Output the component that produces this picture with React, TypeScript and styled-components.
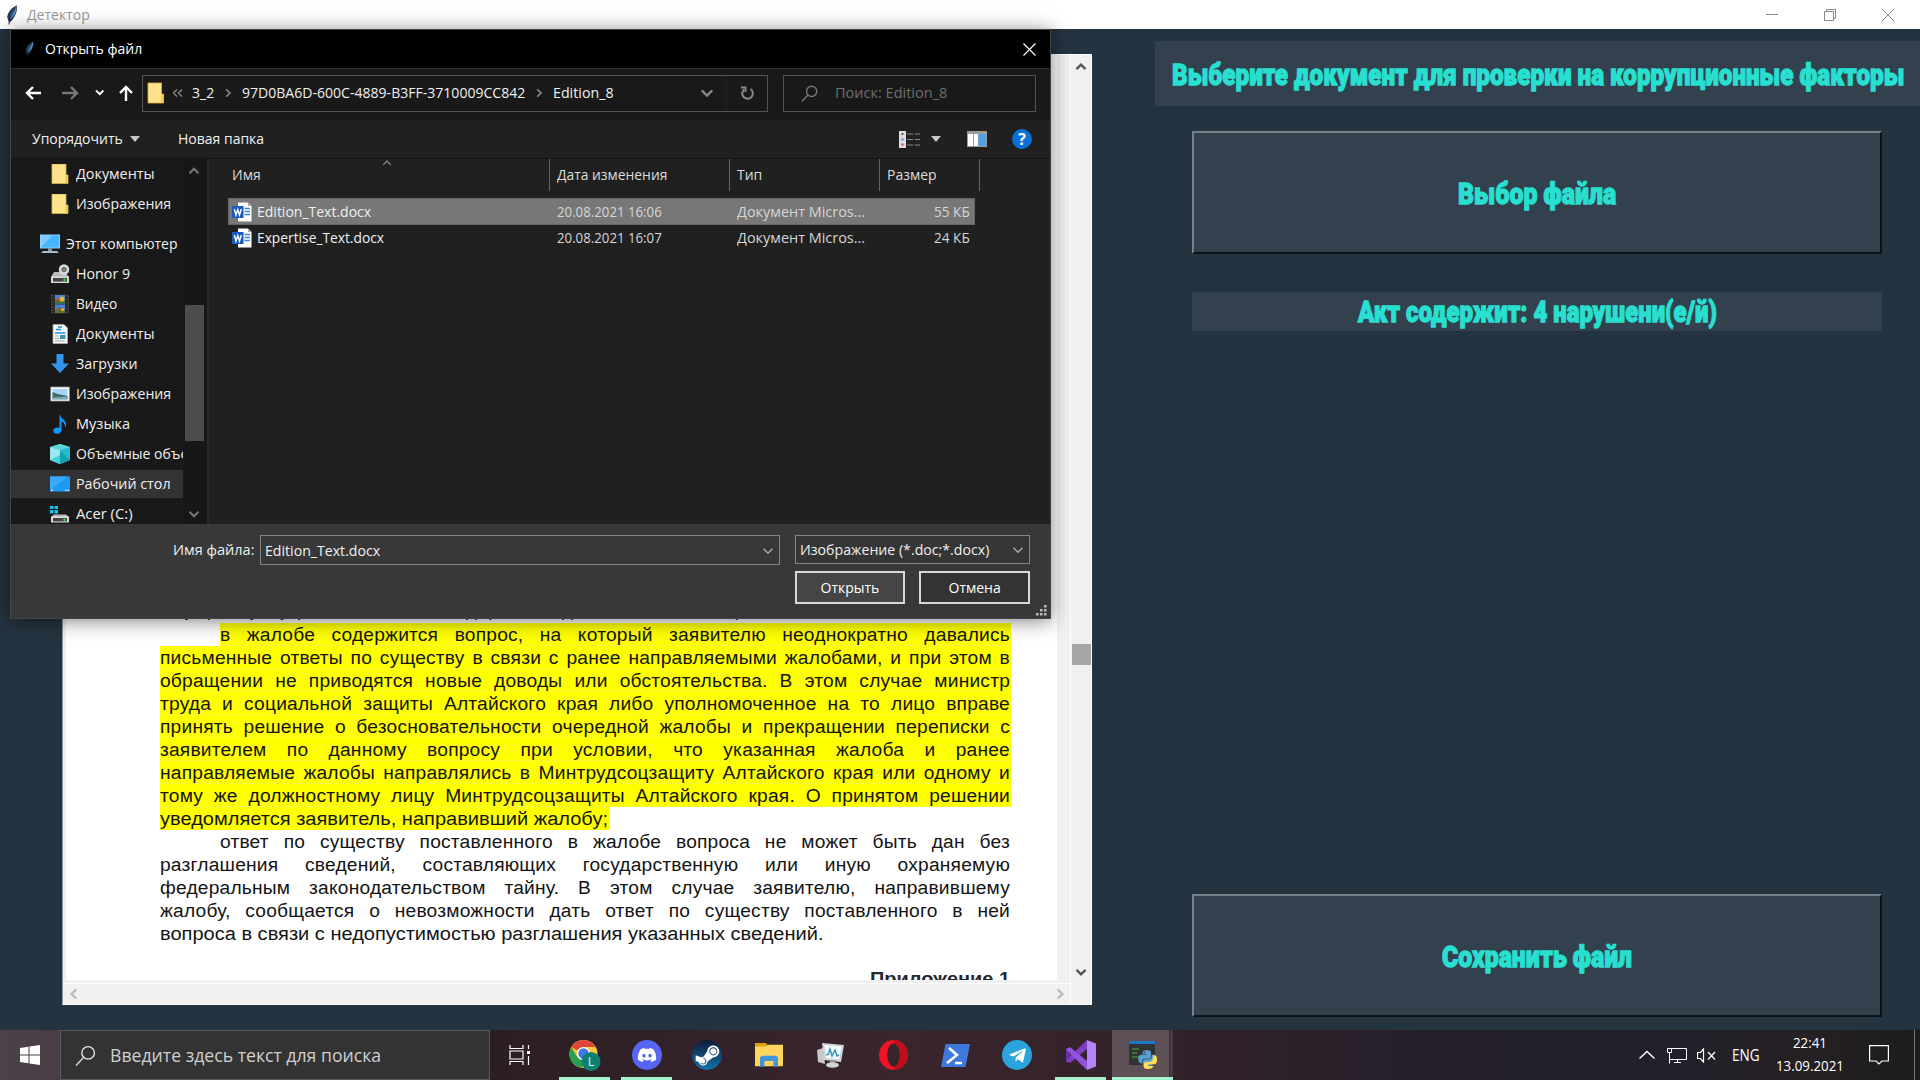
import React, { useLayoutEffect, useRef, useState } from "react";
import styled, { createGlobalStyle, css } from "styled-components";
import { FaDiscord, FaSteamSymbol, FaTelegramPlane, FaPython } from "react-icons/fa";

const Global = createGlobalStyle`
  * { box-sizing: border-box; }
  html, body { margin: 0; padding: 0; }
  body { width: 1920px; height: 1080px; overflow: hidden; font-family: "Open Sans", "Noto Sans", sans-serif; font-size: 14px; }
`;

/* Text squeezed horizontally to an exact width */
const FitBox = styled.span<{ $w: number }>`
  display: inline-block;
  flex: none;
  width: ${(p) => p.$w}px;
  white-space: nowrap;
  text-align: left;
`;
const FitInner = styled.span`
  display: inline-block;
  transform-origin: 0 50%;
`;
function Fit({ w, children }: { w: number; children: React.ReactNode }) {
  const ref = useRef<HTMLSpanElement>(null);
  const [scale, setScale] = useState(1);
  useLayoutEffect(() => {
    if (ref.current) setScale(w / ref.current.offsetWidth);
  }, [w]);
  return (
    <FitBox $w={w}>
      <FitInner ref={ref} style={{ transform: `scaleX(${scale})` }}>{children}</FitInner>
    </FitBox>
  );
}

const Screen = styled.div`
  width: 1920px; height: 1080px; display: flex; flex-direction: column; position: relative; overflow: hidden;
`;
const TitleBar = styled.header`
  height: 29px; background: #fff; display: flex; align-items: center; color: #999; padding-left: 6px; flex: none;
`;
const TitleText = styled.div`margin-left: 9px; line-height: 29px; flex: 1;`;
const WinButtons = styled.div`display: flex; gap: 46px; padding-right: 26px; svg { display: block; }`;

const Body = styled.main`
  flex: 1; background: #243340; display: flex; align-items: flex-start; min-height: 0;
`;

/* Document viewer */
const Viewer = styled.section`
  margin: 25px 0 0 62px; width: 1030px; height: 951px; background: #f0f0f0; flex: none;
  border: 1px solid #fff; border-left: 1px solid #8f979c; display: flex;
`;
const ViewerMain = styled.div`width: 1008px; display: flex; flex-direction: column; border-right: 1px solid #fff;`;
const Page = styled.div`
  margin-left: 3px; width: 991px; height: 925px; background: #fff; overflow: hidden;
  padding: 543px 0 0 94px; font-family: "Liberation Sans", Arial, sans-serif; color: #141414;
`;
const HScroll = styled.div`
  margin-top: 3px; border-top: 1px solid #fff; flex: 1; display: flex; align-items: center; justify-content: space-between; padding: 0 4px 0 5px;
`;
const VScroll = styled.div`
  flex: 1; display: flex; flex-direction: column; align-items: center; justify-content: space-between; padding: 6px 0 26px;
`;
const VThumb = styled.div`width: 19px; height: 21px; background: #a6a6a6; margin-top: 269px;`;
const Line = styled.div<{ $indent?: boolean; $mark?: boolean; $gap?: number }>`
  width: ${(p) => (p.$indent ? 790 : 850)}px;
  margin-left: ${(p) => (p.$indent ? 60 : 0)}px;
  margin-top: ${(p) => p.$gap ?? 0}px;
  height: 23px; line-height: 24px; font-size: 19.2px; letter-spacing: 0.2px; word-spacing: -2px; white-space: nowrap;
  text-align: justify; text-align-last: justify;
  ${(p) => p.$mark && css`background: #ff0; box-shadow: inset 0 -1px #f6f63a, 1px 0 #ff0;`}
`;
const EndLine = styled.div<{ $mark?: boolean }>`
  display: inline-block; height: 23px; line-height: 24px; font-size: 19.2px; vertical-align: top; padding-right: 2px;
  ${(p) => p.$mark && css`background: #ff0;`}
`;
const Appendix = styled.div`width: 850px; text-align: right; font-weight: 700; font-size: 18.5px; line-height: 24px; margin-top: 22px; color: #26282f;`;

/* Right panel */
const Panel = styled.aside`
  margin-left: 63px; width: 765px; height: 1001px; display: flex; flex-direction: column; padding-top: 12px;
  font-family: Roboto, sans-serif; font-weight: 900; font-size: 30px; color: #28dfd0; -webkit-text-stroke: 1.3px #28dfd0;
`;
const Heading = styled.div`height: 65px; background: #32414d; display: flex; align-items: center; justify-content: center; padding-top: 2px;`;
const BigButton = styled.button`
  margin: 25px 0 0 37px; width: 690px; height: 123px; background: #32414d; padding: 1px 0 0; font: inherit; color: inherit;
  border: solid; border-width: 2px; border-color: #76818a #0c1216 #0c1216 #76818a; display: flex; align-items: center; justify-content: center;
`;
const Result = styled.div`margin: 38px 0 0 37px; width: 690px; height: 39px; background: #32414d; display: flex; align-items: center; justify-content: center;`;
const Spacer = styled.div`flex: 1;`;
const SaveWrap = styled.div`padding-bottom: 13px;`;

/* Dialog */
const Dialog = styled.div`
  position: absolute; left: 10px; top: 29px; width: 1041px; height: 590px; background: #202020; color: #f0f0f0;
  border: 1px solid #444; display: flex; flex-direction: column; box-shadow: 0 2px 18px rgba(0, 0, 0, 0.5);
`;
const DTitle = styled.div`
  height: 39px; background: #000; border-bottom: 1px solid #2e2e2e; display: flex; align-items: center; padding: 0 14px 0 13px; color: #fff; flex: none;
  svg { flex: none; }
`;
const DTitleText = styled.div`margin-left: 10px; flex: 1; line-height: 20px;`;
const Nav = styled.div`height: 51px; background: #191919; display: flex; align-items: center; padding: 0 0 3px 14px; flex: none;`;
const NavIcons = styled.div`width: 117px; display: flex; align-items: center; svg { display: block; }`;
const Box = styled.div<{ $w: number }>`
  width: ${(p) => p.$w}px; height: 37px; border: 1px solid #535353; display: flex; align-items: center; line-height: 20px;
`;
const Crumbs = styled.div`flex: 1; display: flex; align-items: center; padding-left: 4px; height: 100%; border-right: 1px solid #222;`;
const Sep = styled.div<{ $w: number }>`width: ${(p) => p.$w}px; display: flex; justify-content: center; svg { display: block; }`;
const DropCell = styled.div`margin-left: auto; width: 38px; display: flex; justify-content: center;`;
const RefreshCell = styled.div`width: 40px; display: flex; justify-content: center;`;
const SearchBox = styled(Box)`margin-left: 15px; color: #6e6e6e; padding-left: 17px; gap: 17px;`;
const Tools = styled.div`
  height: 39px; flex: none; display: flex; align-items: center; padding: 0 18px 0 21px; border-bottom: 1px solid #151515; line-height: 20px;
  svg { display: block; }
`;
const Triangle = styled.i<{ $m: string }>`
  border: 5px solid transparent; border-top: 6px solid #c8c8c8; border-bottom: 0; margin: ${(p) => p.$m};
`;
const HelpSlot = styled.div`margin-left: 25px;`;
const Content = styled.div`height: 365px; display: flex; flex: none;`;
const Tree = styled.div`width: 172px; background: #191919; overflow: hidden; display: flex; flex-direction: column;`;
const TreeRow = styled.div<{ $root?: boolean; $active?: boolean }>`
  flex: none; height: 28px; margin: ${(p) => (p.$root ? "11px 0 1px" : "1px 0")}; display: flex; align-items: center;
  padding-left: ${(p) => (p.$root ? 29 : 39)}px; gap: 6px; line-height: 20px;
  background: ${(p) => (p.$active ? "#333" : "transparent")};
  svg { display: block; flex: none; }
`;
const TreeScroll = styled.div`
  width: 26px; background: #171717; display: flex; flex-direction: column; align-items: center; padding: 6px 2px 4px 0; justify-content: space-between;
  border-right: 2px solid #2a2a2a;
`;
const TreeThumb = styled.div`width: 19px; height: 136px; background: #4d4d4d; margin-top: 60px;`;
const Files = styled.div`flex: 1; padding-left: 20px;`;
const grid = css`display: grid; grid-template-columns: 321px 180px 150px 1fr;`;
const HeadRow = styled.div`${grid} width: 751px; height: 31px; line-height: 32px; color: #ddd;`;
const HeadCell = styled.div<{ $first?: boolean }>`
  border-right: 1px solid #636363; padding-left: ${(p) => (p.$first ? 3 : 7)}px; display: flex; justify-content: space-between;
`;
const SortMark = styled.div`width: 12px; margin-right: 155px; display: flex; align-items: flex-start; margin-top: -1px;`;
const FileRow = styled.div<{ $sel?: boolean }>`
  ${grid} width: 747px; height: ${(p) => (p.$sel ? 27 : 25)}px; line-height: 24px; align-items: center; margin-left: -1px; color: #d6d6d6;
  border: 1px solid ${(p) => (p.$sel ? "#666" : "transparent")}; background: ${(p) => (p.$sel ? "#777" : "transparent")};
`;
const FileList = styled.div`padding-top: 8px;`;
const NameCell = styled.div`display: flex; align-items: center; gap: 5px; padding-left: 3px; color: #f0f0f0; svg { display: block; }`;
const Cell = styled.div<{ $right?: boolean }>`padding-left: 7px; ${(p) => p.$right && css`text-align: right; padding: 0 4px 0 0;`}`;
const Footer = styled.div`
  flex: 1; background: #383838; padding: 11px 20px 0 0; display: flex; gap: 15px; justify-content: flex-end; line-height: 20px;
`;
const NameGroup = styled.div`display: flex; gap: 6px; padding-top: 5px;`;
const Field = styled.div<{ $w: number; $h: number }>`
  width: ${(p) => p.$w}px; height: ${(p) => p.$h}px; border: 1px solid #858585; display: flex; align-items: center; justify-content: space-between; padding: 0 5px 0 4px; background: #353535;
`;
const NameField = styled(Field)`margin-top: -5px; padding-top: 1px; background: #383838;`;
const Actions = styled.div`width: 235px;`;
const ButtonRow = styled.div`display: flex; justify-content: space-between; margin-top: 7px;`;
const DButton = styled.button<{ $main?: boolean }>`
  width: ${(p) => (p.$main ? 110 : 111)}px; height: 33px; font: inherit; color: #fff; padding: 0; line-height: 20px;
  background: ${(p) => (p.$main ? "#454545" : "#333")}; border: 2px solid #d8d8d8;
`;
const Grip = styled.svg`position: absolute; right: 3px; bottom: 2px;`;

/* Taskbar */
const Taskbar = styled.footer`
  height: 50px; display: flex; flex: none; color: #fff;
  background: linear-gradient(90deg, #4b414a 0, #493e46 60px, #2b1e22 490px, #33222a 700px, #3a252c 900px, #33222a 1150px, #241f2b 1450px, #22202c 1650px, #252024 1800px, #1d1c1c 1920px);
`;
const Start = styled.div`width: 60px; display: flex; align-items: center; justify-content: center;`;
const Search = styled.div`
  width: 430px; background: #333; border: 1px solid #5a5a5a; display: flex; align-items: center; padding-left: 14px; gap: 14px; color: #cfcfcf; font-size: 18.5px; line-height: 26px;
`;
const TaskSlot = styled.div<{ $w: number; $run?: boolean; $active?: boolean; $m?: number }>`
  width: ${(p) => p.$w}px; margin-left: ${(p) => p.$m ?? 0}px; display: flex; align-items: center; justify-content: center;
  border-bottom: 3px solid ${(p) => (p.$run ? "#a6f2cf" : "transparent")}; padding-top: 3px;
  ${(p) => p.$active && css`background: linear-gradient(90deg, #5e5057 57px, #2b2024 57px, #4a3b42 58px) padding-box;`}
`;
const Tray = styled.div`margin-left: auto; display: flex; align-items: center; svg { display: block; flex: none; }`;
const TrayItem = styled.div<{ $m: number }>`margin-left: ${(p) => p.$m}px;`;
const Lang = styled.div`margin-left: 16px; font-size: 15.5px; line-height: 20px;`;
const Clock = styled.div`
  margin-left: 16px; margin-right: 1px; width: 68px; display: flex; flex-direction: column; align-items: center; font-size: 14.5px; line-height: 23px; padding-bottom: 2px;
`;
const ShowDesktop = styled.div`width: 6px; height: 50px; border-left: 1px solid #777; margin-left: 25px;`;
const Round = styled.div<{ $bg: string; $s?: number }>`
  width: 30px; height: 30px; border-radius: 50%; background: ${(p) => p.$bg}; display: flex; align-items: center; justify-content: center; font-size: ${(p) => p.$s ?? 20}px;
`;

/* Icons */
const Feather = ({ w = 12, h = 20 }) => (
  <svg width={w} height={h} viewBox="0 0 12 20">
    <path d="M11 0.5C7 1.5 2 6 1.2 12L2.6 16.5L4.5 17C8 13 11.5 8 11 .5Z" fill="#26364f" />
    <path d="M10.500 1C6.500 5 4 9 3.400 14.500C8 11.500 11 7 10.500 1Z" fill="#5590d4" />
    <path d="M9 3L3.600 13.500L3 19.500" stroke="#1a2030" strokeWidth="1" fill="none" />
  </svg>
);
const Chevron = ({ dir = "down", w = 12, c = "#999", s = 2 }: { dir?: string; w?: number; c?: string; s?: number }) => {
  const rot = { down: 0, up: 180, left: 90, right: 270 }[dir];
  return (
    <svg width={w} height={w} viewBox="0 0 12 12">
      <path d="M1.500 3.800L6 8.300L10.500 3.800" transform={`rotate(${rot} 6 6)`} stroke={c} strokeWidth={s} fill="none" />
    </svg>
  );
};
const Folder = ({ w = 18 }) => (
  <svg width={w} height="22" viewBox="0 0 18 22">
    <path d="M1 1H14.500V12H16.500V21H1Z" fill="#ffe28c" stroke="#d9b44a" strokeWidth=".8" />
    <path d="M14 21V13.500L16.800 12V21Z" fill="#f2c94c" />
  </svg>
);
const Word = () => (
  <svg width="20" height="20" viewBox="0 0 20 20">
    <path d="M6 .5H16L19.500 4V19.500H6Z" fill="#fff" />
    <path d="M16 .5V4H19.500Z" fill="#aaa" />
    <path d="M12.500 6.500H18M12.500 9.500H18M12.500 12.500H18" stroke="#3a86d8" strokeWidth="1.400" />
    <rect x="0" y="4" width="11.500" height="12" fill="#185abd" />
    <path d="M2.300 7L4 13L5.800 7.500L7.500 13L9.300 7" stroke="#fff" strokeWidth="1.400" fill="none" />
  </svg>
);
const Monitor = () => (
  <svg width="20" height="20" viewBox="0 0 20 20">
    <rect x=".5" y="1" width="19" height="13" fill="#45b6ff" stroke="#8fd0f5" />
    <path d="M1 13.500L12 1.500H1Z" fill="#7cccff" />
    <path d="M8 14.500H12V17H8Z" fill="#8795a0" /><path d="M1 19L3 17H17L19 19Z" fill="#a9bccb" />
  </svg>
);
const Svg20 = ({ children }: { children: React.ReactNode }) => <svg width="20" height="20" viewBox="0 0 20 20">{children}</svg>;
const TreeIcon = ({ kind }: { kind: string }) => {
  if (kind === "folder") return <Svg20><path d="M2 0H16V11H18V19.500H2Z" fill="#ffe28c" stroke="#d9b44a" strokeWidth=".8" /><path d="M15.500 19V12.500L18 11V19.500Z" fill="#f2c94c" /></Svg20>;
  if (kind === "phone") return <Svg20><path d="M1 13L4 8H15L19 13Z" fill="#b9bcbf" /><circle cx="14" cy="5.500" r="4" fill="#777" stroke="#dadada" strokeWidth="2.500" /><rect x="1" y="12.500" width="18" height="6.500" fill="#d9dadb" /><rect x="3" y="14" width="14" height="3.600" fill="#444" /><circle cx="14.500" cy="16" r="1.200" fill="#3be03b" /></Svg20>;
  if (kind === "video") return <Svg20><rect x="1.500" y="1" width="17" height="18" fill="#2c2c2c" stroke="#555" strokeDasharray="1.500 1.500" /><rect x="5" y="1" width="10" height="8.500" fill="#4a7fd6" /><rect x="5" y="10.500" width="10" height="8.500" fill="#4a7fd6" /><path d="M5 6L9 4L15 7V9.500H5Z" fill="#3c7d33" /><circle cx="12" cy="5" r="2.500" fill="#e8b72e" /><path d="M5 5H9V7H5Z" fill="#c54040" /><path d="M5 16L10 13L15 17V19H5Z" fill="#6b6b2b" /><circle cx="12.500" cy="15.500" r="1.500" fill="#e8b72e" /></Svg20>;
  if (kind === "doc") return <Svg20><path d="M3 .5H14L17.500 4V19.500H3Z" fill="#fafafa" stroke="#aaa" strokeWidth=".8" /><path d="M8 3H12M6 5.500H11M5 9H15.500" stroke="#1d8fd8" strokeWidth="1.600" /><path d="M5 12H9M5 14.500H9M5 17H15" stroke="#9aa" strokeWidth="1" /><rect x="10" y="11" width="5.500" height="4" fill="#4b8fae" /></Svg20>;
  if (kind === "down") return <Svg20><path d="M6.500 0H13.500V9.500H19L10 19L1 9.500H6.500Z" fill="#3396ee" /></Svg20>;
  if (kind === "pic") return <Svg20><rect x=".8" y="3" width="18.500" height="14" fill="#fff" stroke="#999" strokeWidth=".8" /><rect x="2.500" y="4.800" width="15" height="10.500" fill="#a9d5f5" /><path d="M2.500 8L8 10L17.500 12V15.300H2.500Z" fill="#3f6f68" /><path d="M2.500 13.500L17.500 12.500V15.300H2.500Z" fill="#7da6b8" /></Svg20>;
  if (kind === "music") return <Svg20><path d="M10 .5C10.500 5 16.500 5.500 16 11C16 12 15.500 13 15 13.500C15.300 9.500 13 8 11.500 7.500V16C11.500 21 3 20.500 3.300 16.500C3.600 13.500 8 12.800 9.500 14V.5Z" fill="#1299f5" /></Svg20>;
  if (kind === "cube") return <Svg20><path d="M10 0L20 3V16L10 20L0 16V3Z" fill="#27bccc" /><path d="M0 3L10 6V20L0 16Z" fill="#9be9ee" /><path d="M0 3L10 0L20 3L10 6Z" fill="#5fd6de" /><path d="M10 6V20L20 16Z" fill="#15a3b4" /><path d="M0 16L10 11V20Z" fill="#49d0da" /></Svg20>;
  if (kind === "desk") return <Svg20><rect x="0" y="2.500" width="20" height="15" fill="#1e9bf5" /><path d="M0 16L18 2.500H0Z" fill="#39aaff" /><path d="M1 16.300H3M15 16.300H16.500M17.500 16.300H19" stroke="#fff" /></Svg20>;
  return <Svg20><path d="M0 2H3.500V5H0ZM4.500 2H8V5H4.500ZM0 6H3.500V9.500H0ZM4.500 6H8V9.500H4.500Z" fill="#15c3f2" /><path d="M1 13L4 10.500H16L19 13Z" fill="#b9bcbf" /><rect x="1" y="12.500" width="18" height="6" fill="#d9dadb" /><rect x="3" y="14" width="14" height="3.400" fill="#444" /><circle cx="14.500" cy="15.800" r="1.200" fill="#3be03b" /></Svg20>;
};

const Magnifier = ({ s, c, w }: { s: number; c: string; w: number }) => (
  <svg width={s} height={s} viewBox="0 0 20 20" fill="none" stroke={c} strokeWidth={w}>
    <circle cx="12.500" cy="7.500" r="6" /><path d="M8.200 11.800L1 19.500" />
  </svg>
);

const tree: { t: string; k: string; w: number; active?: boolean }[] = [
  { t: "Honor 9", k: "phone", w: 54 },
  { t: "Видео", k: "video", w: 41 },
  { t: "Документы", k: "doc", w: 79 },
  { t: "Загрузки", k: "down", w: 61 },
  { t: "Изображения", k: "pic", w: 95 },
  { t: "Музыка", k: "music", w: 54 },
  { t: "Объемные объекты", k: "cube", w: 137 },
  { t: "Рабочий стол", k: "desk", w: 95, active: true },
  { t: "Acer (C:)", k: "disk", w: 57 },
];

const marked = [
  "в жалобе содержится вопрос, на который заявителю неоднократно давались",
  "письменные ответы по существу в связи с ранее направляемыми жалобами, и при этом в",
  "обращении не приводятся новые доводы или обстоятельства. В этом случае министр",
  "труда и социальной защиты Алтайского края либо уполномоченное на то лицо вправе",
  "принять решение о безосновательности очередной жалобы и прекращении переписки с",
  "заявителем по данному вопросу при условии, что указанная жалоба и ранее",
  "направляемые жалобы направлялись в Минтрудсоцзащиту Алтайского края или одному и",
  "тому же должностному лицу Минтрудсоцзащиты Алтайского края. О принятом решении",
];
const plain = [
  "ответ по существу поставленного в жалобе вопроса не может быть дан без",
  "разглашения сведений, составляющих государственную или иную охраняемую",
  "федеральным законодательством тайну. В этом случае заявителю, направившему",
  "жалобу, сообщается о невозможности дать ответ по существу поставленного в ней",
];

function OpenDialog() {
  return (
    <Dialog>
      <DTitle>
        <Feather w={11} h={16} />
        <DTitleText><Fit w={97}>Открыть файл</Fit></DTitleText>
        <svg width="13" height="13" viewBox="0 0 13 13" stroke="#fff" strokeWidth="1.200"><path d="M.5 .5L12.500 12.500M12.500 .5L.5 12.500" /></svg>
      </DTitle>
      <Nav>
        <NavIcons>
          <svg width="110" height="18" viewBox="0 0 110 18" fill="none" stroke="#fff" strokeWidth="2.400">
            <path d="M16 9H2M8 3L2 9L8 15" />
            <path d="M37 9H51M46 3L52 9L46 15" stroke="#777" />
            <path d="M71 6.500L74.700 10.200L78.400 6.500" strokeWidth="2" />
            <path d="M101 17V3M95 9L101 3L107 9" />
          </svg>
        </NavIcons>
        <Box $w={626}>
          <Crumbs>
            <Folder />
            <Sep $w={24}>
              <svg width="11" height="10" viewBox="0 0 11 10" fill="none" stroke="#888" strokeWidth="1.400"><path d="M5 1.500L1.500 5L5 8.500M10 1.500L6.500 5L10 8.500" /></svg>
            </Sep>
            <Sep $w={3} />
            <Fit w={22}>3_2</Fit>
            <Sep $w={28}><Chevron dir="right" w={10} c="#888" /></Sep>
            <Fit w={283}>97D0BA6D-600C-4889-B3FF-3710009CC842</Fit>
            <Sep $w={28}><Chevron dir="right" w={10} c="#888" /></Sep>
            <Fit w={61}>Edition_8</Fit>
            <DropCell><Chevron w={14} c="#888" s={2} /></DropCell>
          </Crumbs>
          <RefreshCell>
            <svg width="15" height="16" viewBox="0 0 15 16" fill="none" stroke="#888" strokeWidth="2"><path d="M10.500 4A5.300 5.300 0 1 1 4 4.500" /><path d="M1 2.500H5.500V7" /></svg>
          </RefreshCell>
        </Box>
        <SearchBox $w={253}><Magnifier s={17} c="#777" w={1.6} /><Fit w={112}>Поиск: Edition_8</Fit></SearchBox>
      </Nav>
      <Tools>
        <Fit w={91}>Упорядочить</Fit>
        <Triangle $m="0 38px 0 7px" />
        <Fit w={86}>Новая папка</Fit>
        <Spacer />
        <svg width="22" height="17" viewBox="0 0 22 17">
          <rect width="7" height="17" fill="#ddd" /><path d="M2.500 3H4.500" stroke="#555" strokeWidth="2" /><path d="M2.500 8.500H4.500" stroke="#38c" strokeWidth="2" /><path d="M2.500 13.500H4.500" stroke="#c44" strokeWidth="2" />
          <path d="M8 3H14M15.500 3H21M8 8.500H14M15.500 8.500H21M8 14H14M15.500 14H21" stroke="#8a8a8a" strokeWidth="1.200" />
        </svg>
        <Triangle $m="0 26px 0 10px" />
        <svg width="20" height="16" viewBox="0 0 20 16"><rect width="20" height="16" fill="#9c9c9c" /><rect x="1" y="3" width="5" height="12" fill="#fff" /><rect x="7" y="3" width="4" height="12" fill="#fff" /><rect x="11.500" y="3" width="7.500" height="12" fill="#4aa3ea" /></svg>
        <HelpSlot>
          <svg width="20" height="20" viewBox="0 0 20 20"><circle cx="10" cy="10" r="10" fill="#0a6fd6" /><text x="10" y="15.500" textAnchor="middle" fontSize="16" fontWeight="700" fill="#fff">?</text></svg>
        </HelpSlot>
      </Tools>
      <Content>
        <Tree>
          <TreeRow><TreeIcon kind="folder" /><Fit w={79}>Документы</Fit></TreeRow>
          <TreeRow><TreeIcon kind="folder" /><Fit w={95}>Изображения</Fit></TreeRow>
          <TreeRow $root><Monitor /><Fit w={112}>Этот компьютер</Fit></TreeRow>
          {tree.map((r) => (
            <TreeRow key={r.t} $active={r.active}><TreeIcon kind={r.k} /><Fit w={r.w}>{r.t}</Fit></TreeRow>
          ))}
        </Tree>
        <TreeScroll><Chevron dir="up" c="#777" /><TreeThumb /><Chevron c="#777" /></TreeScroll>
        <Files>
          <HeadRow>
            <HeadCell $first><Fit w={29}>Имя</Fit><SortMark><Chevron dir="up" w={10} c="#999" s={1.3} /></SortMark></HeadCell>
            <HeadCell><Fit w={110}>Дата изменения</Fit></HeadCell>
            <HeadCell><Fit w={25}>Тип</Fit></HeadCell>
            <HeadCell><Fit w={50}>Размер</Fit></HeadCell>
          </HeadRow>
          <FileList>
            <FileRow $sel>
              <NameCell><Word /><Fit w={114}>Edition_Text.docx</Fit></NameCell>
              <Cell><Fit w={105}>20.08.2021 16:06</Fit></Cell>
              <Cell><Fit w={128}>Документ Micros...</Fit></Cell>
              <Cell $right><Fit w={36}>55 КБ</Fit></Cell>
            </FileRow>
            <FileRow>
              <NameCell><Word /><Fit w={127}>Expertise_Text.docx</Fit></NameCell>
              <Cell><Fit w={105}>20.08.2021 16:07</Fit></Cell>
              <Cell><Fit w={128}>Документ Micros...</Fit></Cell>
              <Cell $right><Fit w={36}>24 КБ</Fit></Cell>
            </FileRow>
          </FileList>
        </Files>
      </Content>
      <Footer>
        <NameGroup>
          <Fit w={81}>Имя файла:</Fit>
          <NameField $w={520} $h={30}><Fit w={115}>Edition_Text.docx</Fit><Chevron c="#aaa" s={1.4} /></NameField>
        </NameGroup>
        <Actions>
          <Field $w={235} $h={29}><Fit w={189}>Изображение (*.doc;*.docx)</Fit><Chevron c="#aaa" s={1.4} /></Field>
          <ButtonRow>
            <DButton $main><Fit w={59}>Открыть</Fit></DButton>
            <DButton><Fit w={52}>Отмена</Fit></DButton>
          </ButtonRow>
        </Actions>
      </Footer>
      <Grip width="11" height="11" viewBox="0 0 11 11" fill="#bbb">
        <path d="M8 0h2.500v2.500H8zM8 4h2.500v2.500H8zM8 8h2.500v2.500H8zM4 4h2.500v2.500H4zM4 8h2.500v2.500H4zM0 8h2.500v2.500H0z" />
      </Grip>
    </Dialog>
  );
}

export default function App() {
  return (
    <Screen>
      <Global />
      <TitleBar>
        <Feather />
        <TitleText><Fit w={63}>Детектор</Fit></TitleText>
        <WinButtons>
          <svg width="12" height="12" viewBox="0 0 12 12"><path d="M0 5.500H12" stroke="#888" /></svg>
          <svg width="12" height="12" viewBox="0 0 12 12" fill="none" stroke="#888"><path d="M.5 2.500H9.500V11.500H.5ZM2.500 2.500V.5H11.500V9.500H9.500" /></svg>
          <svg width="12" height="12" viewBox="0 0 12 12" stroke="#888"><path d="M0 0L12 12M12 0L0 12" /></svg>
        </WinButtons>
      </TitleBar>
      <Body>
        <Viewer>
          <ViewerMain>
            <Page>
              <Line>имуществу, угрозы жизни и здоровью должностного лица, а также членов семьи,</Line>
              {marked.map((t, i) => <Line key={t} $mark $indent={i === 0} $gap={i === 0 ? 2 : 0}>{t}</Line>)}
              <EndLine $mark><Fit w={448}>уведомляется заявитель, направивший жалобу;</Fit></EndLine>
              {plain.map((t, i) => <Line key={t} $indent={i === 0}>{t}</Line>)}
              <EndLine><Fit w={664}>вопроса в связи с недопустимостью разглашения указанных сведений.</Fit></EndLine>
              <Appendix><Fit w={140}>Приложение 1</Fit></Appendix>
            </Page>
            <HScroll><Chevron dir="left" c="#bbb" s={2.4} /><Chevron dir="right" c="#bbb" s={2.4} /></HScroll>
          </ViewerMain>
          <VScroll><Chevron dir="up" c="#555" s={2.4} /><VThumb /><Chevron c="#555" s={2.4} /></VScroll>
        </Viewer>
        <Panel>
          <Heading><Fit w={732}>Выберите документ для проверки на коррупционные факторы</Fit></Heading>
          <BigButton><Fit w={158}>Выбор файла</Fit></BigButton>
          <Result><Fit w={359}>Акт содержит: 4 нарушени(е/й)</Fit></Result>
          <Spacer />
          <SaveWrap><BigButton><Fit w={190}>Сохранить файл</Fit></BigButton></SaveWrap>
        </Panel>
      </Body>
      <OpenDialog />
      <Taskbar>
        <Start>
          <svg width="20" height="20" viewBox="0 0 20 20" fill="#fff"><path d="M0 3L8.500 1.700V9.500H0ZM9.500 1.500L20 0V9.500H9.500ZM0 10.500H8.500V18.300L0 17ZM9.500 10.500H20V20L9.500 18.500Z" /></svg>
        </Start>
        <Search><Magnifier s={21} c="#e6e6e6" w={1.3} /><Fit w={271}>Введите здесь текст для поиска</Fit></Search>
        <TaskSlot $w={60}>
          <svg width="22" height="20" viewBox="0 0 22 20" fill="none" stroke="#fff" strokeWidth="1.200"><path d="M1 0V3.500H14V0M1 6H14V14H1ZM1 20V16.500H14V20M19.500 0V4M19.500 11V20" /><rect x="18" y="6" width="3" height="3" fill="#fff" stroke="none" /></svg>
        </TaskSlot>
        <TaskSlot $w={51} $m={9} $run>
          <svg width="32" height="32" viewBox="0 0 32 32">
            <circle cx="14.500" cy="15" r="14" fill="#fbc934" /><path d="M14.500 15L2.400 8A14 14 0 0 1 26.600 8H14.500Z" fill="#e0463a" /><path d="M2.400 8L8.500 18.500L15 22L13 29A14 14 0 0 1 2.400 8Z" fill="#2a9d52" />
            <circle cx="14.500" cy="14.500" r="6.600" fill="#fff" /><circle cx="14.500" cy="14.500" r="5.200" fill="#3d78e8" />
            <circle cx="22" cy="22.500" r="9.500" fill="#0c8073" /><text x="22" y="27" fontSize="12.500" textAnchor="middle" fill="#cfe">L</text>
          </svg>
        </TaskSlot>
        <TaskSlot $w={51} $m={11} $run><Round $bg="#5865f2"><FaDiscord /></Round></TaskSlot>
        <TaskSlot $w={62} $m={4}><Round $bg="linear-gradient(#0e1a38, #1473a8)" $s={27}><FaSteamSymbol /></Round></TaskSlot>
        <TaskSlot $w={62}>
          <svg width="28" height="24" viewBox="0 0 28 28" preserveAspectRatio="none"><path d="M0 0H11L13 3V6H0Z" fill="#e0a116" /><path d="M0 4H11L13 2H28V27H0Z" fill="#ffd55e" /><path d="M5 27.500V16.500L7 15H21L23 16.500V27.500H18.500V21H9.500V27.500Z" fill="#3f96d8" /></svg>
        </TaskSlot>
        <TaskSlot $w={62}>
          <svg width="28" height="26" viewBox="0 0 28 26"><path d="M0 8L6 6L8 22L1 20Z" fill="#c6c9c8" /><path d="M5 1L27 3L24 20L7 18Z" fill="#cfd4d6" /><path d="M7.500 3L24.500 4.800L22.300 17.500L9 16Z" fill="#f2fbff" /><path d="M9 13L11.500 12L13 7L15 14L18 8L20 14L22 13" stroke="#3391bd" strokeWidth="1.400" fill="none" /><path d="M13 18H18V21H13Z" fill="#999" /><ellipse cx="15.500" cy="23" rx="6.500" ry="2.800" fill="#d2d5d6" /></svg>
        </TaskSlot>
        <TaskSlot $w={62}>
          <svg width="29" height="30" viewBox="0 0 29 30"><ellipse cx="14.500" cy="15" rx="14.500" ry="15" fill="#ee1426" /><path d="M14.500 0A14.500 15 0 0 1 14.500 30Z" fill="#c00f1c" /><ellipse cx="14.500" cy="15" rx="6.300" ry="11.500" fill="#38242b" /></svg>
        </TaskSlot>
        <TaskSlot $w={62}>
          <svg width="29" height="23" viewBox="0 0 29 23"><path d="M4.500 0H29L24.500 23H0Z" fill="#3f78dc" /><path d="M8 4L16 11L6 19M14 19H21" stroke="#fff" strokeWidth="2.500" fill="none" /></svg>
        </TaskSlot>
        <TaskSlot $w={62}><Round $bg="#2ba3dc" $s={19}><FaTelegramPlane /></Round></TaskSlot>
        <TaskSlot $w={51} $m={7} $run>
          <svg width="30" height="30" viewBox="0 0 30 30"><path d="M21 0L30 3.500V26.500L21 30Z" fill="#b583f5" /><path d="M21 0V9L4 23L0 21.500V20Z" fill="#7e3fc6" /><path d="M21 30V21L4 7L0 9V10Z" fill="#9152dc" /><path d="M0 9L4.500 15L0 21Z" fill="#6a2fb0" /></svg>
        </TaskSlot>
        <TaskSlot $w={61} $m={6} $run $active>
          <svg width="28" height="29" viewBox="0 0 28 29"><rect width="26" height="24" fill="#2e3436" /><rect width="26" height="3" fill="#1977c4" /><path d="M3 8H10M3 12H8M3 16H11" stroke="#3e8a3e" strokeWidth="1.500" /><g transform="translate(8 8)"><FaPython size={20} color="#5a9fd4" /></g><path d="M24.500 14C28 14 28 17 28 19C28 22 27 23 24.500 23.500H19V25H24.500C24 28 18 29 15 27V22C17 20 23 22 23.500 19Z" fill="#ffdf50" /></svg>
        </TaskSlot>
        <Tray>
          <svg width="16" height="10" viewBox="0 0 16 10" fill="none" stroke="#fff" strokeWidth="1.400"><path d="M.5 8.500L8 1.500L15.500 8.500" /></svg>
          <TrayItem $m={12}><svg width="20" height="17" viewBox="0 0 20 17" fill="none" stroke="#fff"><path d="M4.500 1.500H19.500V12.500H2.500V6.500M10.500 12.500V15.500M7 15.500H14M.5 1.500H4.500V5.500H.5ZM2.500 5.500V16.500" /></svg></TrayItem>
          <TrayItem $m={10}><svg width="19" height="15" viewBox="0 0 19 15" fill="none" stroke="#fff"><path d="M.5 4.500H3.500L6.500 1V14L3.500 10.500H.5ZM11 4L18 11.500M18 4L11 11.500" strokeWidth="1.200" /></svg></TrayItem>
          <Lang><Fit w={28}>ENG</Fit></Lang>
          <Clock><Fit w={34}>22:41</Fit><Fit w={68}>13.09.2021</Fit></Clock>
          <TrayItem $m={24}><svg width="20" height="20" viewBox="0 0 20 20" fill="none" stroke="#fff" strokeWidth="1.200"><path d="M.6 .6H19.400V16H13L10 19L7 16H.6Z" /></svg></TrayItem>
          <ShowDesktop />
        </Tray>
      </Taskbar>
    </Screen>
  );
}
